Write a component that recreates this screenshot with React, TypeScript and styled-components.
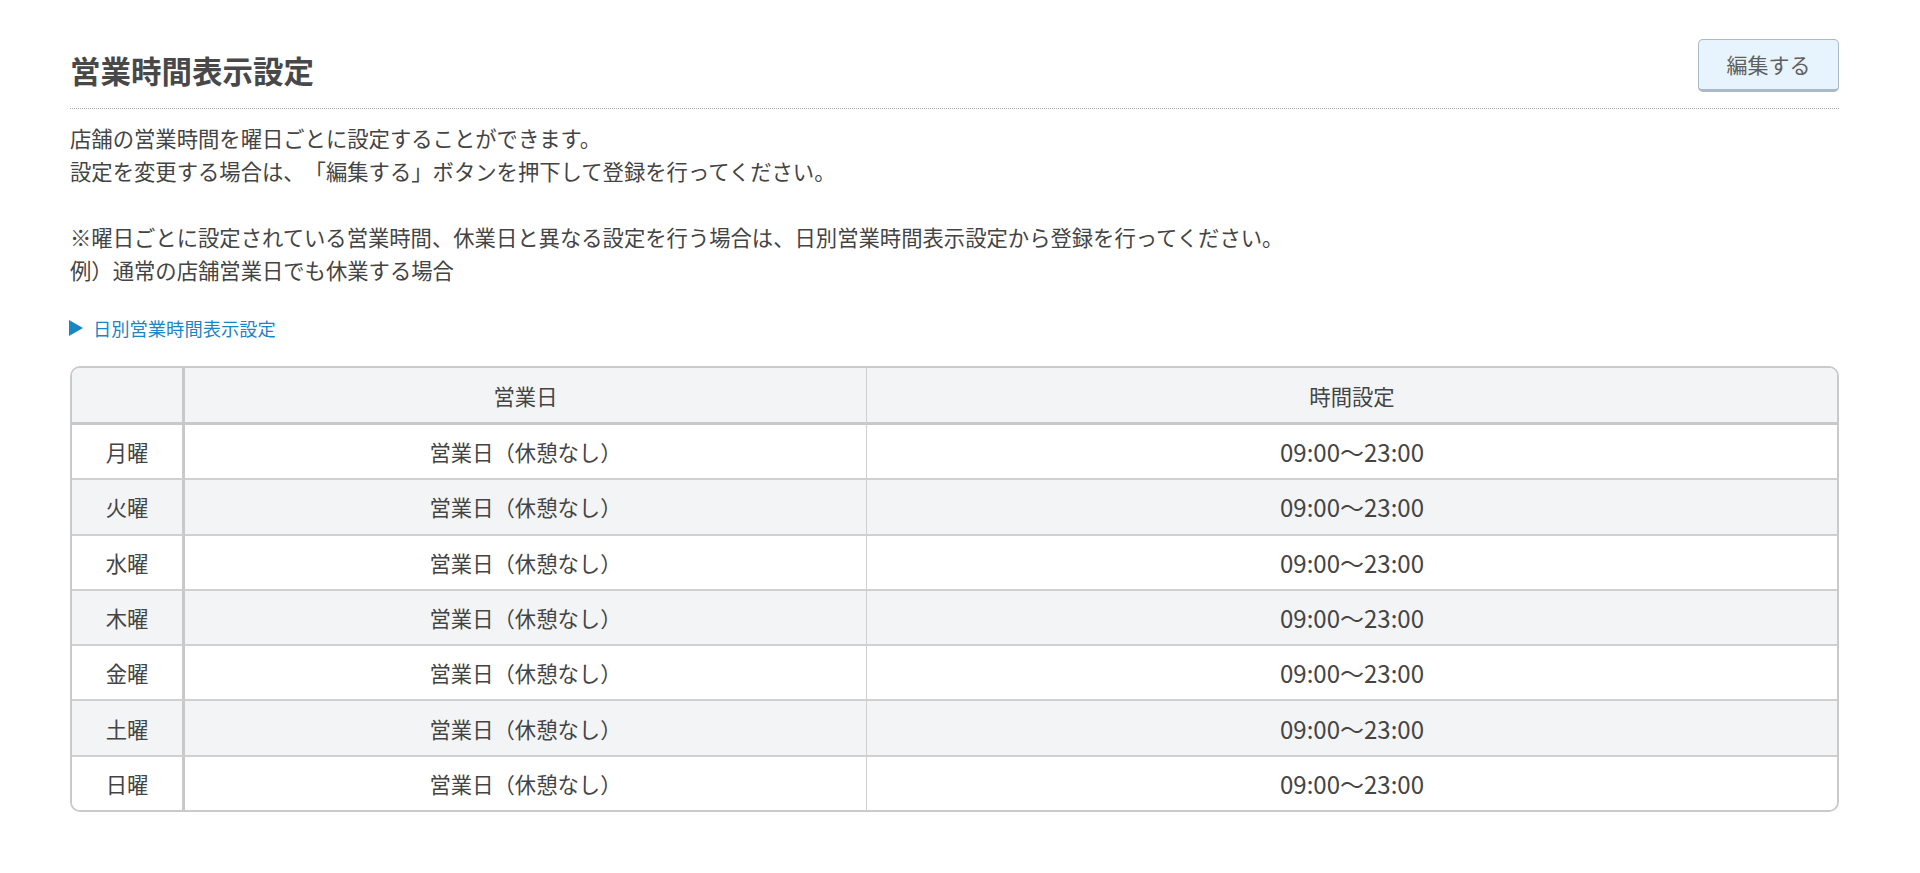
import React from "react";
import styled, { createGlobalStyle } from "styled-components";

const GlobalStyle = createGlobalStyle`
  html, body {
    margin: 0;
    padding: 0;
    background: #fff;
  }
  body {
    font-family: "Noto Sans CJK JP", "Noto Sans", sans-serif;
    color: #444;
    text-spacing-trim: space-all;
  }
`;

// Whole settings block
const Page = styled.div`
  width: 1769px;
  margin-left: 70px;
  padding-top: 39px;
`;

// Title row with the edit button on the right
const Header = styled.div`
  display: flex;
  align-items: center;
  justify-content: space-between;
  padding-bottom: 16px;
  border-bottom: 1px dotted #a8a8a8;
`;

const Title = styled.h1`
  margin: 0;
  padding-top: 10px;
  font-size: 30.5px;
  line-height: 1.2;
  font-weight: 700;
  color: #484848;
`;

const EditButton = styled.button`
  width: 141px;
  height: 53px;
  font-family: inherit;
  font-size: 21px;
  color: #5f5f5f;
  background: #e7f4fd;
  border: 1px solid #a9b9c6;
  border-bottom-width: 3px;
  border-radius: 5px;
  cursor: pointer;
  padding: 0 0 2px;
`;

const Notes = styled.div`
  margin-top: 12px;
  font-size: 21.33px;
  line-height: 33px;
  color: #444;
`;

const Line = styled.p<{ $gapBefore?: boolean }>`
  margin: ${({ $gapBefore }) => ($gapBefore ? "33px 0 0" : "0")};
`;

const DailyLink = styled.a`
  display: inline-flex;
  align-items: center;
  gap: 10px;
  margin-top: 30px;
  font-size: 18.3px;
  line-height: 24px;
  color: #1a87c5;
  text-decoration: none;
  cursor: pointer;
`;

const Arrow = styled.span`
  width: 0;
  height: 0;
  margin-left: -1px;
  border-top: 8px solid transparent;
  border-bottom: 8px solid transparent;
  border-left: 14px solid #1a87c5;
`;

const TableFrame = styled.div`
  margin-top: 25px;
  border: 2px solid #cacaca;
  border-radius: 10px;
  overflow: hidden;
`;

const Table = styled.table`
  width: 100%;
  border-collapse: separate;
  border-spacing: 0;
  table-layout: fixed;
  font-size: 21.33px;
  color: #444;
`;

const Row = styled.tr<{ $shaded?: boolean }>`
  background: ${({ $shaded }) => ($shaded ? "#f3f4f6" : "#fff")};
`;

const HeadCell = styled.th<{ $first?: boolean }>`
  height: 54px;
  padding: 0;
  font-weight: 400;
  text-align: center;
  background: #f3f4f6;
  border-bottom: 3px solid #c9c9c9;
  border-right: ${({ $first }) => ($first ? "3px solid #c9c9c9" : "1px solid #d0d0d0")};
  &:last-child {
    border-right: none;
  }
`;

const Cell = styled.td<{ $first?: boolean; $last?: boolean; $time?: boolean }>`
  height: 53.3px;
  padding: 0;
  text-align: center;
  font-size: ${({ $time }) => ($time ? "24px" : "inherit")};
  border-bottom: ${({ $last }) => ($last ? "none" : "2px solid #d0d0d0")};
  border-right: ${({ $first }) => ($first ? "3px solid #c9c9c9" : "1px solid #d0d0d0")};
  &:last-child {
    border-right: none;
  }
`;

const days = ["月曜", "火曜", "水曜", "木曜", "金曜", "土曜", "日曜"];

export default function App() {
  return (
    <>
      <GlobalStyle />
      <Page>
        <Header>
          <Title>営業時間表示設定</Title>
          <EditButton>編集する</EditButton>
        </Header>

        <Notes>
          <Line>店舗の営業時間を曜日ごとに設定することができます。</Line>
          <Line>設定を変更する場合は、「編集する」ボタンを押下して登録を行ってください。</Line>
          <Line $gapBefore>
            ※曜日ごとに設定されている営業時間、休業日と異なる設定を行う場合は、日別営業時間表示設定から登録を行ってください。
          </Line>
          <Line>例）通常の店舗営業日でも休業する場合</Line>
        </Notes>

        <DailyLink>
          <Arrow />
          日別営業時間表示設定
        </DailyLink>

        <TableFrame>
          <Table>
            <colgroup>
              <col style={{ width: 113 }} />
              <col style={{ width: 682 }} />
              <col />
            </colgroup>
            <thead>
              <tr>
                <HeadCell $first />
                <HeadCell>営業日</HeadCell>
                <HeadCell>時間設定</HeadCell>
              </tr>
            </thead>
            <tbody>
              {days.map((day, i) => {
                const last = i === days.length - 1;
                return (
                  <Row key={day} $shaded={i % 2 === 1}>
                    <Cell $first $last={last}>{day}</Cell>
                    <Cell $last={last}>営業日（休憩なし）</Cell>
                    <Cell $last={last} $time>09:00〜23:00</Cell>
                  </Row>
                );
              })}
            </tbody>
          </Table>
        </TableFrame>
      </Page>
    </>
  );
}
